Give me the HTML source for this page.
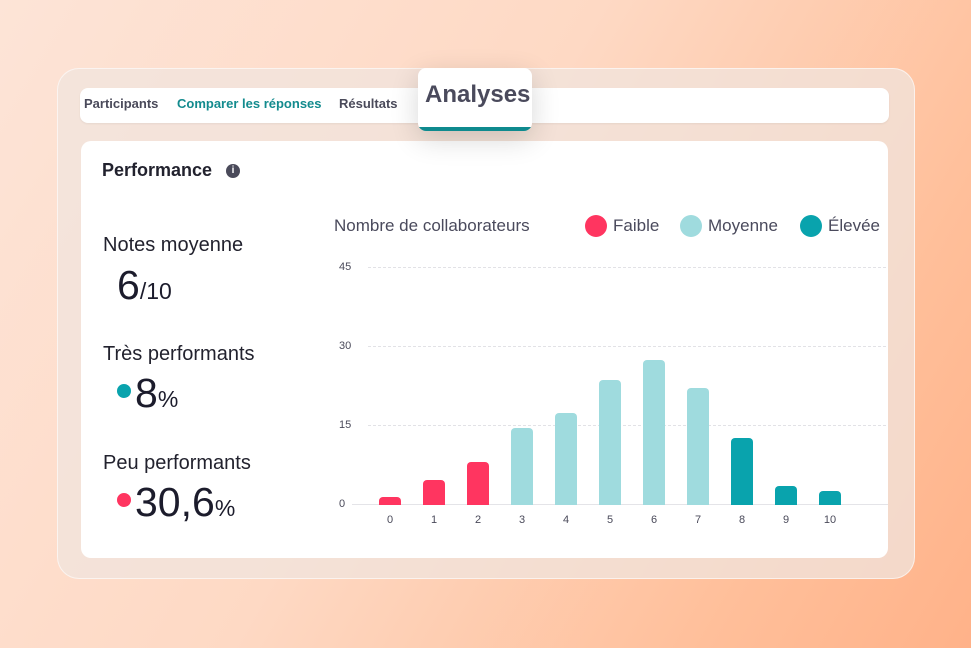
<!DOCTYPE html>
<html><head><meta charset="utf-8"><style>
*{margin:0;padding:0;box-sizing:border-box}
body{width:971px;height:648px;overflow:hidden;position:relative;font-family:"Liberation Sans",sans-serif;
background:linear-gradient(120deg,#fde4d7 0%,#fed9c4 45%,#ffbf9a 80%,#ffb289 100%);color:#1f1f33}
.a{position:absolute}
.panel{left:57px;top:68px;width:858px;height:511px;border-radius:22px;background:rgba(240,228,222,0.75);border:1px solid rgba(255,255,255,0.6)}
.tabs{left:80px;top:88px;width:809px;height:35px;border-radius:8px;background:#fff;box-shadow:0 1px 2px rgba(0,0,0,.06)}
.tab{top:96px;font-size:13px;font-weight:bold;color:#4a4a5a}
.card{left:81px;top:141px;width:807px;height:417px;border-radius:10px;background:#fff}
.an{left:418px;top:68px;width:114px;height:63px;border-radius:8px;background:#fff;box-shadow:0 8px 28px rgba(0,0,0,.16);overflow:hidden}
.an div{position:absolute;left:0;right:0;bottom:0;height:4px;background:#0f8a8e}
.lbl{font-size:20px;color:#22222e}
.big{font-size:41px;color:#1c1c2c}
.dot{border-radius:50%}
.yl{font-size:11px;color:#4a4a5a;left:339px}
.xl{font-size:11px;color:#4a4a5a;top:514px;width:30px;text-align:center}
.g{left:368px;width:518px;border-top:1px dashed #e2e2e6;height:0}
.b{width:22px;border-radius:4px 4px 0 0}
.leg{top:216px;font-size:17px;color:#4a4a5c}
</style></head><body>
<div class="a panel"></div>
<div class="a tabs"></div>
<div class="a tab" style="left:84px">Participants</div>
<div class="a tab" style="left:177px;color:#138b8e">Comparer les réponses</div>
<div class="a tab" style="left:339px">Résultats</div>
<div class="a card"></div>
<div class="a an"><div></div></div>
<div class="a" style="left:425px;top:81px;font-size:24px;font-weight:bold;color:#4a4a5c">Analyses</div>
<div class="a" style="left:102px;top:160px;font-size:18px;font-weight:bold;color:#22222e">Performance</div>
<div class="a dot" style="left:226px;top:164px;width:14px;height:14px;background:#4a4a5a;color:#fff;font-size:10px;font-weight:bold;text-align:center;line-height:14px">i</div>

<div class="a lbl" style="left:103px;top:234px">Notes moyenne</div>
<div class="a big" style="left:117px;top:262px">6<span style="font-size:23px">/10</span></div>
<div class="a lbl" style="left:103px;top:343px">Très performants</div>
<div class="a dot" style="left:117px;top:384px;width:14px;height:14px;background:#09a3ad"></div>
<div class="a big" style="left:135px;top:370px">8<span style="font-size:23px">%</span></div>
<div class="a lbl" style="left:103px;top:452px">Peu performants</div>
<div class="a dot" style="left:117px;top:493px;width:14px;height:14px;background:#ff3560"></div>
<div class="a big" style="left:135px;top:479px">30,6<span style="font-size:23px">%</span></div>

<div class="a" style="left:334px;top:216px;font-size:17px;color:#4a4a5c">Nombre de collaborateurs</div>
<div class="a dot" style="left:585px;top:215px;width:22px;height:22px;background:#ff3560"></div>
<div class="a leg" style="left:613px">Faible</div>
<div class="a dot" style="left:680px;top:215px;width:22px;height:22px;background:#9fdbde"></div>
<div class="a leg" style="left:708px">Moyenne</div>
<div class="a dot" style="left:800px;top:215px;width:22px;height:22px;background:#09a3ad"></div>
<div class="a leg" style="left:828px">Élevée</div>

<div class="a yl" style="top:261px">45</div>
<div class="a yl" style="top:340px">30</div>
<div class="a yl" style="top:419px">15</div>
<div class="a yl" style="top:498px">0</div>
<div class="a g" style="top:267px"></div>
<div class="a g" style="top:346px"></div>
<div class="a g" style="top:425px"></div>
<div class="a" style="left:352px;top:504px;width:536px;height:1px;background:#e4e4e8"></div>

<div class="a b" style="left:379px;top:497px;height:8px;background:#ff3560"></div>
<div class="a b" style="left:423px;top:480px;height:25px;background:#ff3560"></div>
<div class="a b" style="left:467px;top:462px;height:43px;background:#ff3560"></div>
<div class="a b" style="left:511px;top:428px;height:77px;background:#9fdbde"></div>
<div class="a b" style="left:555px;top:413px;height:92px;background:#9fdbde"></div>
<div class="a b" style="left:599px;top:380px;height:125px;background:#9fdbde"></div>
<div class="a b" style="left:643px;top:360px;height:145px;background:#9fdbde"></div>
<div class="a b" style="left:687px;top:388px;height:117px;background:#9fdbde"></div>
<div class="a b" style="left:731px;top:438px;height:67px;background:#09a3ad"></div>
<div class="a b" style="left:775px;top:486px;height:19px;background:#09a3ad"></div>
<div class="a b" style="left:819px;top:491px;height:14px;background:#09a3ad"></div>

<div class="a xl" style="left:375px">0</div>
<div class="a xl" style="left:419px">1</div>
<div class="a xl" style="left:463px">2</div>
<div class="a xl" style="left:507px">3</div>
<div class="a xl" style="left:551px">4</div>
<div class="a xl" style="left:595px">5</div>
<div class="a xl" style="left:639px">6</div>
<div class="a xl" style="left:683px">7</div>
<div class="a xl" style="left:727px">8</div>
<div class="a xl" style="left:771px">9</div>
<div class="a xl" style="left:815px">10</div>
</body></html>
